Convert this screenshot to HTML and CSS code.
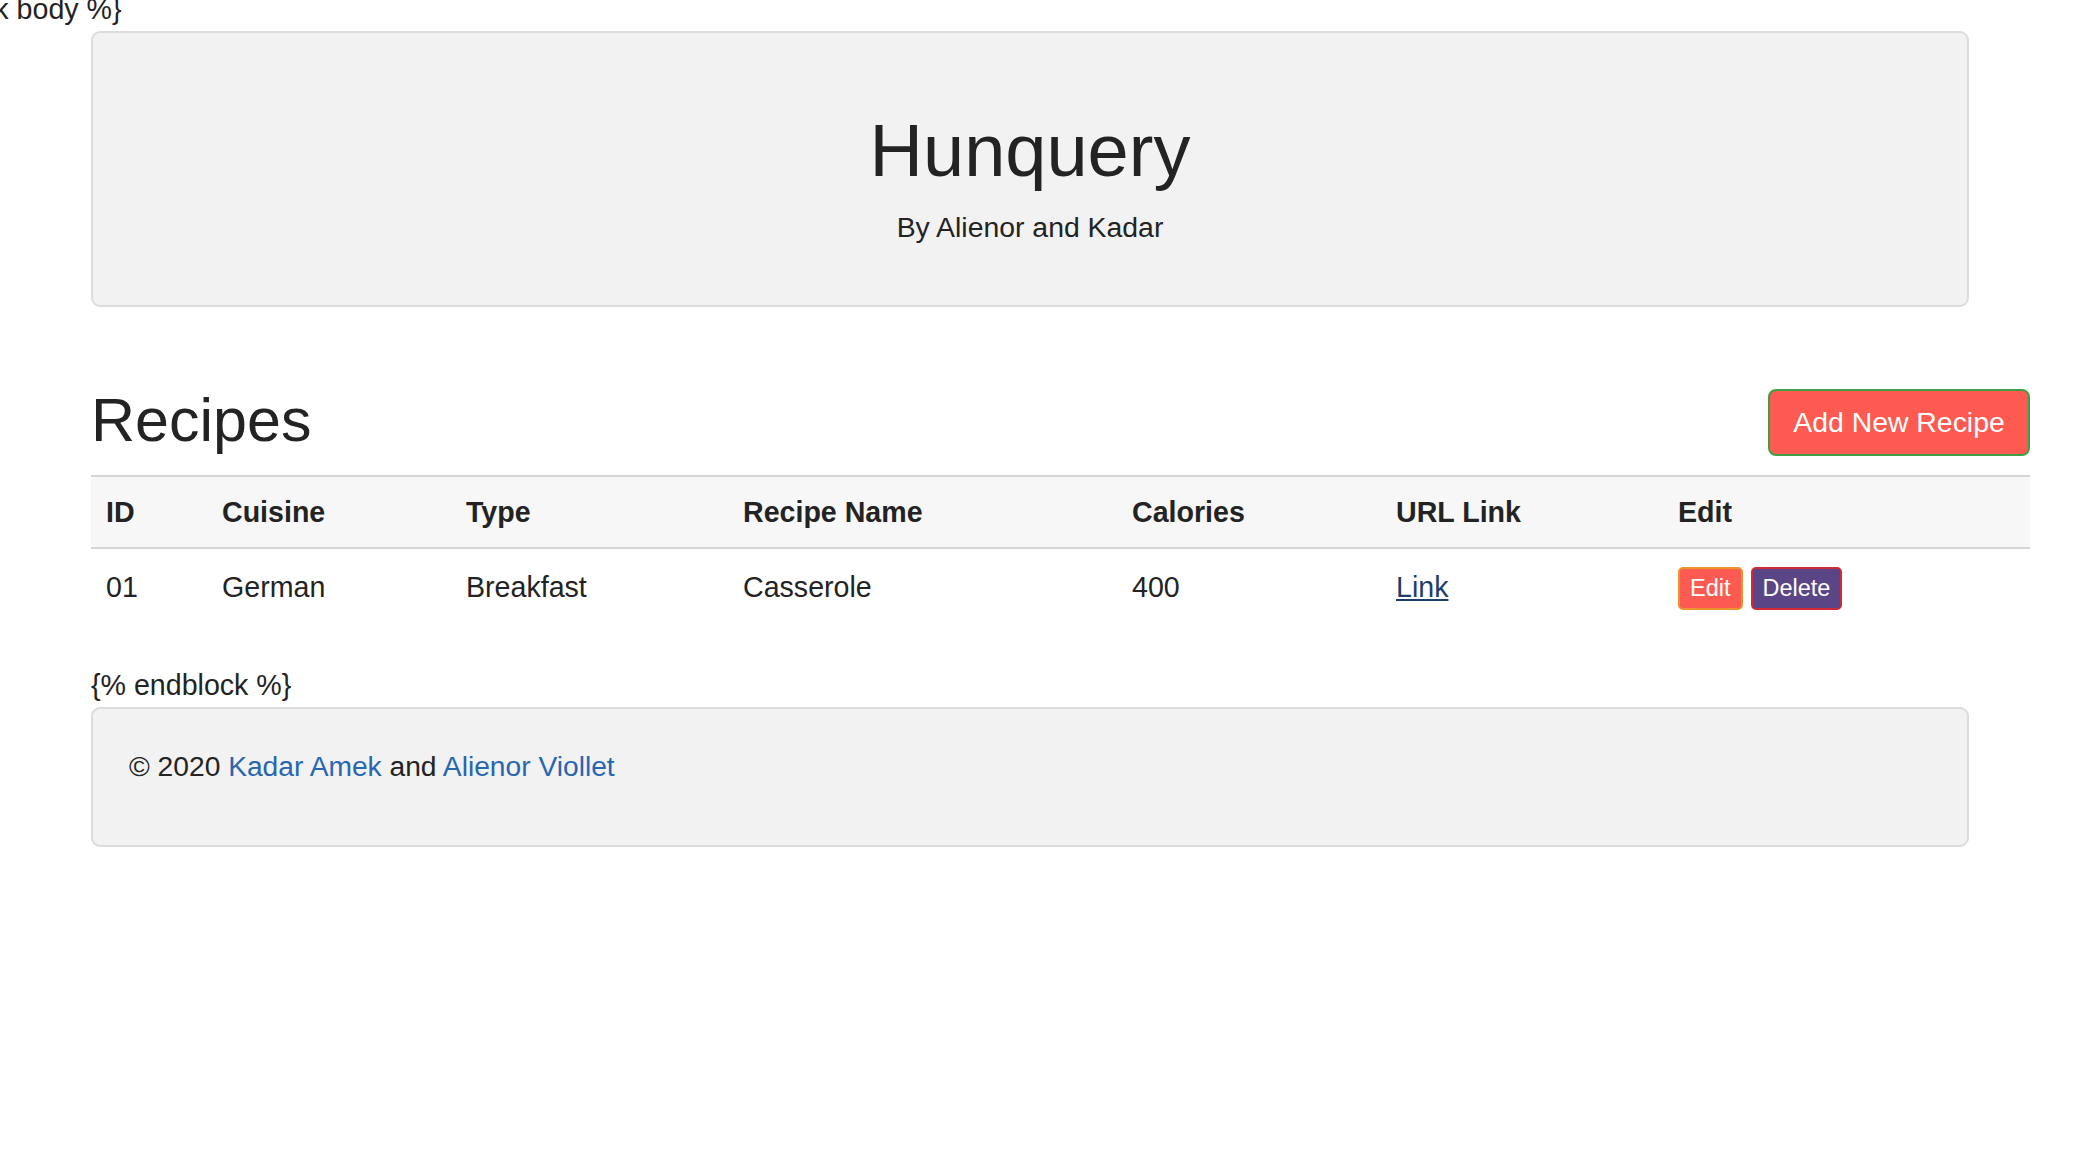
FILE: index.html
```html
<!DOCTYPE html>
<html lang="en">
<head>
<meta charset="utf-8">
<title>Hunquery</title>
<link rel="stylesheet" href="styles.css">
</head>
<body>
<div class="tpl tpl-top">{% block body %}</div>
<div class="page">
  <header class="jumbo">
    <h1 class="jumbo-title">Hunquery</h1>
    <p class="jumbo-sub">By Alienor and Kadar</p>
  </header>

  <div class="section-head">
    <h2 class="section-title">Recipes</h2>
    <a class="btn-add" href="#">Add New Recipe</a>
  </div>

  <table class="recipes">
    <colgroup>
      <col class="c-id"><col class="c-cuisine"><col class="c-type"><col class="c-name"><col class="c-cal"><col class="c-url"><col class="c-edit">
    </colgroup>
    <thead>
      <tr>
        <th>ID</th><th>Cuisine</th><th>Type</th><th>Recipe Name</th><th>Calories</th><th>URL Link</th><th>Edit</th>
      </tr>
    </thead>
    <tbody>
      <tr>
        <td>01</td><td>German</td><td>Breakfast</td><td>Casserole</td><td>400</td>
        <td><a class="row-link" href="#">Link</a></td>
        <td><a class="btn-sm btn-edit" href="#">Edit</a><a class="btn-sm btn-delete" href="#">Delete</a></td>
      </tr>
    </tbody>
  </table>

  <div class="tpl">{% endblock %}</div>
  <footer class="foot">
    <p class="foot-text">© 2020 <a href="#">Kadar Amek</a> and <a href="#">Alienor Viollet</a></p>
  </footer>
</div>
</body>
</html>
```
FILE: styles.css
```css
html, body {
  margin: 0;
  padding: 0;
  background: #ffffff;
}
body {
  font-family: "Liberation Sans", Arial, Helvetica, sans-serif;
  font-size: 28.6px;
  line-height: 1.5;
  color: #232323;
  overflow: hidden;
}
.tpl {
  white-space: nowrap;
  line-height: 43px;
}
.tpl-top {
  margin: -12px 0 0 -101px;
}
.page {
  margin-left: 91px;
  width: 1878px;
}
.jumbo {
  box-sizing: border-box;
  height: 276px;
  background: #f2f2f2;
  border: 2px solid #dcdcdc;
  border-radius: 9px;
  text-align: center;
  padding-top: 74px;
}
.jumbo-title {
  margin: 0;
  font-size: 74px;
  font-weight: 400;
  line-height: 1.2;
  color: #232323;
}
.jumbo-sub {
  margin: 10px 0 0;
  font-size: 28.4px;
}
.section-head {
  width: 1939px;
  margin-top: 77px;
  display: flex;
  justify-content: space-between;
  align-items: center;
}
.section-title {
  margin: 0;
  font-size: 61px;
  font-weight: 400;
  line-height: 1.2;
  color: #232323;
}
.btn-add {
  box-sizing: border-box;
  height: 67px;
  width: 262px;
  margin-top: 3px;
  display: flex;
  align-items: center;
  justify-content: center;
  background: #fd5a52;
  border: 2.5px solid #3f9f45;
  border-radius: 8px;
  color: #ffffff;
  text-decoration: none;
  font-size: 28.4px;
}
.recipes {
  width: 1939px;
  margin-top: 18px;
  margin-bottom: 41px;
  border-collapse: collapse;
  table-layout: fixed;
}
.c-id { width: 116px; }
.c-cuisine { width: 244px; }
.c-type { width: 277px; }
.c-name { width: 389px; }
.c-cal { width: 264px; }
.c-url { width: 282px; }
.c-edit { width: 367px; }
.recipes thead tr {
  background: #f7f7f7;
  border-top: 2px solid #d6d6d6;
  border-bottom: 2px solid #d6d6d6;
}
.recipes th {
  text-align: left;
  font-weight: 700;
  padding: 14px 15px 13px;
  white-space: nowrap;
}
.recipes td {
  padding: 16px 15px 13px;
  white-space: nowrap;
}
.row-link {
  color: #1d3d6b;
  text-decoration: underline;
}
.btn-sm {
  display: inline-block;
  font-size: 23.5px;
  line-height: 1.5;
  padding: 2px 10px;
  border: 2px solid transparent;
  border-radius: 5px;
  color: #ffffff;
  text-decoration: none;
}
.btn-edit {
  background: #fd5a52;
  border-color: #ec942c;
  margin-right: 8px;
}
.btn-delete {
  background: #5a4586;
  border-color: #cf2b35;
}
.foot {
  box-sizing: border-box;
  background: #f2f2f2;
  border: 2px solid #dcdcdc;
  border-radius: 9px;
  padding: 36px 36px 57px;
}
.foot-text {
  margin: 0;
  font-size: 28.2px;
}
.foot-text a {
  color: #2866b0;
  text-decoration: none;
}
```
